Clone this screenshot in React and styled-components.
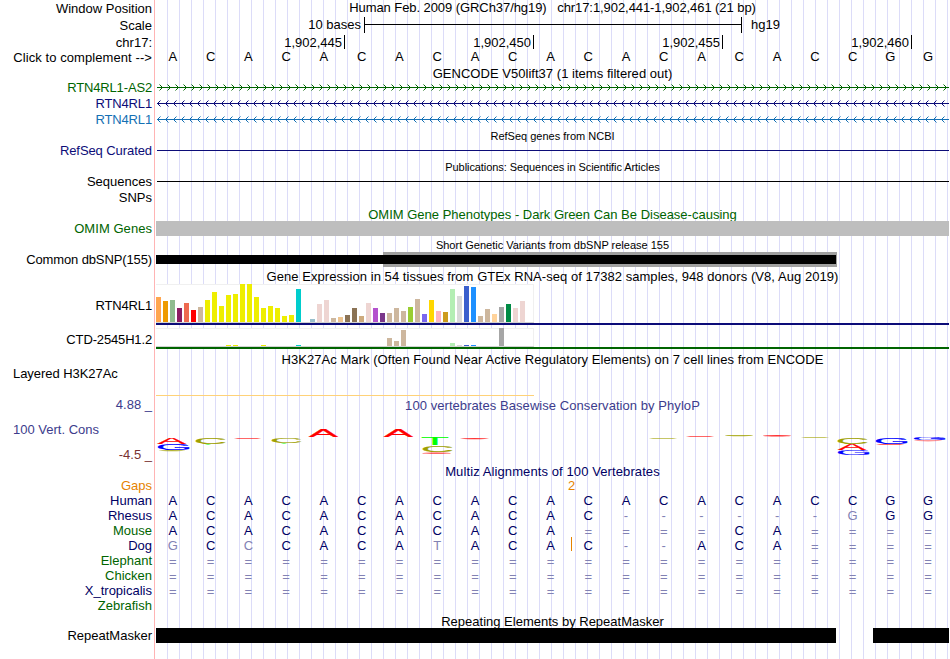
import React from 'react';
import styled, { createGlobalStyle } from 'styled-components';

const GlobalStyle = createGlobalStyle`
    body {
        margin: 0;
        background: #ffffff;
        font-family: "Liberation Sans", Arial, sans-serif;
        font-size: 13px;
        line-height: 15px;
        color: #000000;
        overflow: hidden;
    }
`;

const NAVY = '#0c0c78';
const GREEN = '#006400';
const ALIGN = '#000064';
const CONS = '#3c3c8c';
const ORANGE = '#e68200';

// gap is the space above each label
const labels = [
    { text: 'Window Position', gap: 1 },
    { text: 'Scale', gap: 2 },
    { text: 'chr17:', gap: 2 },
    { text: 'Click to complement -->', gap: 0, spacing: 0.08 },
    { text: 'RTN4RL1-AS2', gap: 15, color: GREEN, spacing: -0.15 },
    { text: 'RTN4RL1', gap: 1, color: NAVY, spacing: -0.15 },
    { text: 'RTN4RL1', gap: 1, color: '#1470b4', spacing: -0.15 },
    { text: 'RefSeq Curated', gap: 16, color: NAVY, spacing: -0.08 },
    { text: 'Sequences', gap: 16 },
    { text: 'SNPs', gap: 1 },
    { text: 'OMIM Genes', gap: 16, color: GREEN, spacing: 0.05 },
    { text: 'Common dbSNP(155)', gap: 16, spacing: -0.12 },
    { text: 'RTN4RL1', gap: 31, spacing: -0.15 },
    { text: 'CTD-2545H1.2', gap: 19, spacing: -0.15 },
    { text: 'Layered H3K27Ac', gap: 19, left: true, spacing: -0.05 },
    { text: '4.88 _', gap: 16, color: CONS },
    { text: '100 Vert. Cons', gap: 10, color: CONS, left: true },
    { text: '-4.5 _', gap: 10, color: '#783232' },
    { text: 'Gaps', gap: 16, color: ORANGE },
    { text: 'Human', gap: 0, color: ALIGN },
    { text: 'Rhesus', gap: 0, color: ALIGN },
    { text: 'Mouse', gap: 0, color: GREEN },
    { text: 'Dog', gap: 0, color: ALIGN },
    { text: 'Elephant', gap: 0, color: GREEN },
    { text: 'Chicken', gap: 0, color: GREEN },
    { text: 'X_tropicalis', gap: 0, color: ALIGN },
    { text: 'Zebrafish', gap: 0, color: GREEN },
    { text: 'RepeatMasker', gap: 15 },
];

const positions = ['1,902,445', '1,902,450', '1,902,455', '1,902,460'];

const reference = 'ACACACACACACACACACCGG';

// lower case is a base that differs from the reference
const alignments = [
    { species: 'Human', bases: reference },
    { species: 'Rhesus', bases: 'ACACACACACAC------gGG' },
    { species: 'Mouse', bases: 'ACACACACACA====CA====' },
    { species: 'Dog', bases: 'gCcCACAtACAC--ACA====', insertAt: 11 },
    { species: 'Elephant', bases: '=====================' },
    { species: 'Chicken', bases: '=====================' },
    { species: 'X_tropicalis', bases: '=====================' },
];

const tissueColors = [
    '#ffa54f', '#ee9a00', '#8fbc8f', '#8b1c62', '#ee6a50', '#ff0000', '#cdb79e',
    '#eeee00', '#eeee00', '#eeee00', '#eeee00', '#eeee00', '#eeee00', '#eeee00',
    '#eeee00', '#eeee00', '#eeee00', '#eeee00', '#eeee00', '#eeee00', '#00cdcd',
    '#ee82ee', '#9ac0cd', '#eed5d2', '#eed5d2', '#cdb79e', '#eec591', '#8b7355',
    '#8b7355', '#cdaa7d', '#eed5d2', '#b452cd', '#7a378b', '#cdb79e', '#cdb79e',
    '#cdb79e', '#9acd32', '#cdb79e', '#7a67ee', '#ffd700', '#ffb6c1', '#cd9b1d',
    '#b4eeb4', '#d9d9d9', '#3a5fcd', '#1e90ff', '#cdb79e', '#cdb79e', '#ffd39b',
    '#a6a6a6', '#008b45', '#eed5d2', '#eed5d2', '#ff00ff',
];

const rtnLevels = [
    25, 21, 22, 14, 19, 12, 15, 22, 30, 16, 27, 28, 38, 38, 25, 14, 16, 14, 6, 7, 33,
    0, 3, 18, 22, 4, 5, 7, 14, 6, 19, 14, 9, 9, 14, 11, 15, 23, 8, 22, 11, 10,
    33, 26, 36, 35, 6, 13, 8, 15, 18, 14, 21, 0,
];

const ctdLevels = tissueColors.map((color, i) => (
    { 10: 1, 11: 1, 15: 1, 20: 1, 33: 8, 34: 5, 35: 16, 42: 3, 43: 1, 44: 1, 45: 1, 49: 18 }[i] || 0
));

// [base, x, y, width, height] inside the conservation strip
const logo = [
    ['A', 1.5, 13, 28.5, 6],
    ['G', 2, 19, 31, 6],
    ['C', 3, 25, 26, 1.3],
    ['C', 40, 13, 29, 6],
    ['T', 49, 19, 6, 0.9],
    ['A', 78, 13, 27, 0.8],
    ['C', 116, 13, 29, 5],
    ['T', 125, 18, 6, 0.9],
    ['A', 153, 4, 29, 8],
    ['A', 228, 4, 29, 8],
    ['T', 266, 13, 26, 7],
    ['C', 267, 20, 29, 7],
    ['A', 266, 27.6, 29, 1.2],
    ['A', 304, 13, 29, 1.2],
    ['C', 493, 13, 28, 0.8],
    ['A', 530, 11, 28, 0.8],
    ['C', 569, 10, 28, 1.4],
    ['A', 607, 10.2, 28, 1.4],
    ['C', 645, 12, 28, 0.8],
    ['C', 682, 13, 29, 6],
    ['A', 682, 19, 28, 6],
    ['G', 682, 25, 31, 5],
    ['G', 720, 13, 31, 6],
    ['A', 720, 19, 28, 0.8],
    ['G', 758, 13, 31, 2.4],
    ['A', 758, 15.2, 28, 0.8],
];

// side bearing, ink width, overshoot and ink height of each base at font-size 10
const glyphs = {
    A: { left: 0.03, width: 6.6, drop: 0, height: 6.9, color: '#ff0000' },
    C: { left: 0.5, width: 6.3, drop: 0.1, height: 7.1, color: '#a0a000' },
    G: { left: 0.5, width: 6.6, drop: 0.1, height: 7.1, color: '#0000ff' },
    T: { left: 0.2, width: 5.7, drop: 0, height: 6.9, color: '#00ff00' },
};

const LogoLetter = ({ base, x, y, width, height }) => {
    const g = glyphs[base];

    // too flat to be read as a letter, only a sliver is left
    if (height < 1.5) {
        return (
            <ellipse
                cx={x + width / 2}
                cy={y + 0.6}
                rx={width / 2}
                ry={height / 2}
                fill={g.color}
                opacity="0.8"
            />
        );
    }

    const sx = width / g.width;
    const sy = height / g.height;
    return (
        <text
            fontSize="10"
            fill={g.color}
            stroke={g.color}
            strokeWidth="0.15"
            transform={`translate(${x - g.left * sx} ${y + height - g.drop * sy}) scale(${sx} ${sy})`}
        >
            {base}
        </text>
    );
};

const GeneArrows = ({ id, color, reverse }) => (
    <ArrowSvg width="793" height="7">
        <defs>
            <pattern id={id} width="8" height="7" x={reverse ? 0 : 1} patternUnits="userSpaceOnUse">
                <path
                    d={reverse ? 'M4.5 0.5 L1.5 3.5 L4.5 6.5' : 'M2.5 0.5 L5.5 3.5 L2.5 6.5'}
                    fill="none"
                    stroke={color}
                    strokeWidth="1"
                />
            </pattern>
        </defs>
        <rect x="1" width="792" height="7" fill={`url(#${id})`} />
        <rect x="1" y="3" width="792" height="1" fill={color} />
    </ArrowSvg>
);

const Expression = ({ levels, height }) => (
    <ExpressionBox $height={height}>
        {levels.map((level, i) => (
            <Bar key={i} style={{ height: level, backgroundColor: tissueColors[i] }} />
        ))}
    </ExpressionBox>
);

const App = () => {
    return (
        <Browser>
            <GlobalStyle />
            <LabelColumn>
                {labels.map((label, i) => (
                    <Label
                        key={i}
                        $gap={label.gap}
                        $color={label.color}
                        $left={label.left}
                        $spacing={label.spacing}
                    >
                        {label.text}
                    </Label>
                ))}
            </LabelColumn>

            <Tracks>
                <Title $spacing={-0.07}>{'Human Feb. 2009 (GRCh37/hg19)   chr17:1,902,441-1,902,461 (21 bp)'}</Title>

                <ScaleRow>
                    <ScaleText>10 bases</ScaleText>
                    <Ruler />
                    <span>hg19</span>
                </ScaleRow>

                <PositionRow>
                    {positions.map(pos => (
                        <Position key={pos}>{pos}<Tick /></Position>
                    ))}
                </PositionRow>

                <BaseRow>
                    {reference.split('').map((base, i) => <Base key={i}>{base}</Base>)}
                </BaseRow>

                <Title $gap={2} $spacing={0.03}>GENCODE V50lift37 (1 items filtered out)</Title>
                <GeneStack>
                    <GeneArrows id="as2" color={GREEN} />
                    <GeneArrows id="rtn" color={NAVY} reverse />
                    <GeneArrows id="rtnAlt" color="#1470b4" reverse />
                </GeneStack>

                <SmallTitle $gap={7}>RefSeq genes from NCBI</SmallTitle>
                <Line $gap={8} $color={NAVY} />

                <SmallTitle $gap={10} $spacing={-0.07}>Publications: Sequences in Scientific Articles</SmallTitle>
                <Line $gap={8} $color="#000000" />

                <Title $gap={25} $color={GREEN}>OMIM Gene Phenotypes - Dark Green Can Be Disease-causing</Title>
                <OmimBar />

                <SmallTitle $gap={3}>Short Genetic Variants from dbSNP release 155</SmallTitle>
                <Variants>
                    <VariantWide />
                    <VariantNarrow />
                </Variants>

                <Title $gap={2} $spacing={0.05}>Gene Expression in 54 tissues from GTEx RNA-seq of 17382 samples, 948 donors (V8, Aug 2019)</Title>
                <Expression levels={rtnLevels} height={39} />
                <GeneModel $color={NAVY} />
                <Expression levels={ctdLevels} height={19} />
                <GeneModel $color={GREEN} />

                <Title $spacing={0.05}>H3K27Ac Mark (Often Found Near Active Regulatory Elements) on 7 cell lines from ENCODE</Title>
                <LayeredLine />

                <Title $gap={2} $color={CONS} $spacing={0.06}>100 vertebrates Basewise Conservation by PhyloP</Title>
                <LogoSvg width="793" height="35">
                    {logo.map(([base, x, y, width, height], i) => (
                        <LogoLetter key={i} base={base} x={x} y={y} width={width} height={height} />
                    ))}
                </LogoSvg>

                <Title $gap={4} $color={ALIGN} $spacing={0.1}>Multiz Alignments of 100 Vertebrates</Title>
                <GapRow>2</GapRow>
                {alignments.map(row => (
                    <BaseRow key={row.species}>
                        {row.bases.split('').map((base, i) => (
                            <Base
                                key={i}
                                $color={/[ACGT]/.test(base) ? ALIGN : '#8282b4'}
                                $low={base === '='}
                            >
                                {row.insertAt === i && <InsertMark />}
                                {base.toUpperCase()}
                            </Base>
                        ))}
                    </BaseRow>
                ))}

                <Title $gap={16}>Repeating Elements by RepeatMasker</Title>
                <Repeats>
                    <Repeat $width={680} />
                    <Repeat $width={76} />
                </Repeats>
            </Tracks>
        </Browser>
    );
};

export default App;

const Browser = styled.div`
    display: flex;
    width: 949px;
    height: 659px;
    overflow: hidden;
    white-space: pre;
`;

const LabelColumn = styled.div`
    display: flex;
    flex-direction: column;
    box-sizing: border-box;
    width: 155px;
    padding-right: 2px;
    border-right: 1px solid #ffb4b4;
    flex-shrink: 0;
`;

const Label = styled.div`
    height: 15px;
    margin-top: ${props => props.$gap}px;
    padding-left: ${props => (props.$left ? 13 : 0)}px;
    text-align: ${props => (props.$left ? 'left' : 'right')};
    letter-spacing: ${props => props.$spacing || 0}px;
    color: ${props => props.$color || '#000000'};
`;

const Tracks = styled.div`
    display: flex;
    flex-direction: column;
    width: 793px;
    margin-left: 1px;
    background: repeating-linear-gradient(to right, transparent 0 11px, #dcdcf8 11px 12px);
`;

const Title = styled.div`
    height: 15px;
    margin-top: ${props => props.$gap || 0}px;
    text-align: center;
    letter-spacing: ${props => props.$spacing || 0}px;
    color: ${props => props.$color || '#000000'};
`;

const SmallTitle = styled.div`
    height: 12px;
    margin-top: ${props => props.$gap}px;
    font-size: 11px;
    line-height: 12px;
    text-align: center;
    letter-spacing: ${props => props.$spacing || 0}px;
`;

const ScaleRow = styled.div`
    display: flex;
    height: 16px;
    padding-top: 2px;
`;

const ScaleText = styled.div`
    width: 205px;
    margin-right: 3px;
    text-align: right;
`;

const Ruler = styled.div`
    box-sizing: border-box;
    width: 378px;
    height: 16px;
    margin-right: 9px;
    border: solid #000000;
    border-width: 0 1px;
    background: linear-gradient(#000000, #000000) 0 7px / 100% 1px no-repeat;
`;

const PositionRow = styled.div`
    display: flex;
    height: 14px;
    padding-top: 2px;
`;

const Position = styled.div`
    display: flex;
    justify-content: flex-end;
    width: 189px;
`;

const Tick = styled.div`
    width: 1px;
    height: 14px;
    margin-left: 2px;
    background: #000000;
`;

const BaseRow = styled.div`
    display: grid;
    grid-template-columns: repeat(21, 1fr);
    height: 15px;
    margin-left: -2px;
    margin-right: 2px;
`;

const Base = styled.div`
    position: relative;
    line-height: ${props => (props.$low ? 17 : 15)}px;
    text-align: center;
    color: ${props => props.$color || '#000000'};
`;

const InsertMark = styled.span`
    position: absolute;
    left: 2px;
    top: -1px;
    width: 1px;
    height: 14px;
    background: #e68200;
`;

const GeneStack = styled.div`
    display: flex;
    flex-direction: column;
    gap: 9px;
    margin-top: 3px;
`;

const ArrowSvg = styled.svg`
    display: block;
`;

const Line = styled.div`
    height: 1px;
    margin-top: ${props => props.$gap}px;
    margin-left: 1px;
    background: ${props => props.$color};
`;

const OmimBar = styled.div`
    height: 15px;
    margin-top: -1px;
    background: #bebebe;
    z-index: 1;
`;

const Variants = styled.div`
    display: grid;
    height: 15px;
    margin-top: 1px;
    align-items: center;
`;

const VariantWide = styled.div`
    grid-area: 1 / 1;
    width: 454px;
    height: 15px;
    margin-left: 227px;
    background: #a0a0a0;
`;

const VariantNarrow = styled.div`
    grid-area: 1 / 1;
    width: 680px;
    height: 9px;
    background: #000000;
`;

const ExpressionBox = styled.div`
    display: flex;
    align-items: flex-end;
    gap: 2px;
    box-sizing: border-box;
    width: 378px;
    height: ${props => props.$height}px;
    background: #ffffff;
    border-bottom: 1px solid #d2d2d2;
    box-shadow: inset -1px 1px 0 #f0f0f0;
`;

const Bar = styled.div`
    width: 5px;
`;

const GeneModel = styled.div`
    height: 2px;
    margin-bottom: 3px;
    background: ${props => props.$color};
`;

const LayeredLine = styled.div`
    width: 378px;
    height: 1px;
    margin-top: 28px;
    background: #ffd278;
`;

const LogoSvg = styled.svg`
    display: block;
    margin-top: 12px;
`;

const GapRow = styled.div`
    height: 15px;
    margin-top: -1px;
    padding-left: 412px;
    color: #e68200;
`;

const Repeats = styled.div`
    display: flex;
    justify-content: space-between;
    margin-top: -1px;
`;

const Repeat = styled.div`
    width: ${props => props.$width}px;
    height: 15px;
    background: #000000;
`;
